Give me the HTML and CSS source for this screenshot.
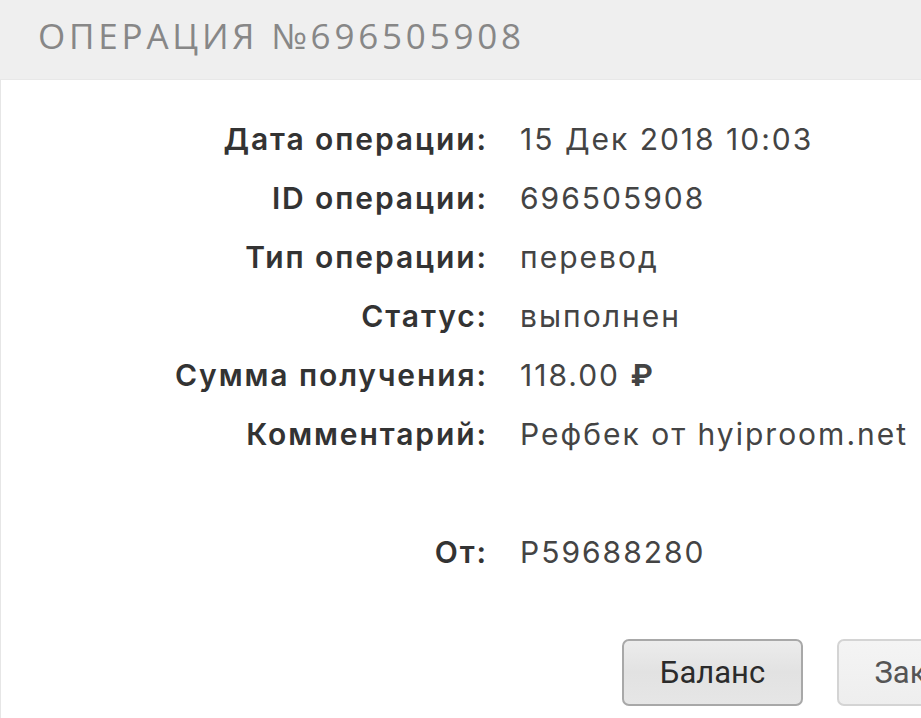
FILE: index.html
```html
<!DOCTYPE html>
<html lang="ru">
<head>
<meta charset="utf-8">
<link rel="stylesheet" href="styles.css">
</head>
<body>
<div class="dialog">
  <div class="dialog-head"><h1 class="dialog-title">ОПЕРАЦИЯ №696505908</h1></div>
  <div class="dialog-body">
    <dl class="details">
      <dt>Дата операции:</dt><dd>15 Дек 2018 10:03</dd>
      <dt>ID операции:</dt><dd>696505908</dd>
      <dt>Тип операции:</dt><dd>перевод</dd>
      <dt>Статус:</dt><dd>выполнен</dd>
      <dt>Сумма получения:</dt><dd>118.00 <span class="rub">₽</span></dd>
      <dt>Комментарий:</dt><dd>Рефбек от hyiproom.net</dd>
      <dt class="empty"></dt><dd class="empty"></dd>
      <dt>От:</dt><dd>P59688280</dd>
    </dl>
    <div class="actions">
      <button class="btn">Баланс</button>
      <button class="btn btn-light">Закрыть</button>
    </div>
  </div>
</div>
</body>
</html>
```
FILE: styles.css
```css
html, body {
  margin: 0;
  padding: 0;
  background: #fff;
  overflow: hidden;
}
.dialog {
  width: 1200px;
  height: 718px;
  background: #fff;
}
.dialog-head {
  height: 80px;
  background: #efefef;
  display: flex;
  align-items: center;
  padding-left: 38px;
  border-bottom: 1px solid #e8e8e8;
  box-sizing: border-box;
}
.dialog-title {
  margin: 0;
  font-family: "Open Sans", sans-serif;
  font-weight: 400;
  font-size: 35px;
  letter-spacing: 3.8px;
  color: #878787;
  line-height: 1;
  margin-top: -9px;
}
.dialog-body {
  border-left: 1px solid #e6e6e6;
  height: 638px;
  box-sizing: border-box;
  padding-top: 29px;
}
.details {
  margin: 0;
  display: grid;
  grid-template-columns: 485px auto;
  column-gap: 34px;
  grid-auto-rows: 59px;
  font-family: "Inter", sans-serif;
  font-size: 30px;
  align-items: center;
}
.details dt {
  text-align: right;
  font-weight: 600;
  color: #333;
  letter-spacing: 1.9px;
  margin-right: -2px;
}
.details dd {
  margin: 0;
  font-weight: 400;
  color: #444;
  white-space: nowrap;
  letter-spacing: 2px;
}
.rub { font-weight: 700; }
.actions {
  display: flex;
  gap: 34px;
  padding-left: 621px;
  margin-top: 58px;
}
.btn {
  height: 67px;
  width: 181px;
  border: 2px solid #a8a8a8;
  border-radius: 7px;
  background: linear-gradient(#ececec, #e2e2e2 50%, #e6e6e6);
  font-family: "Roboto", sans-serif;
  font-size: 31px;
  color: #2b2b2b;
  padding: 0;
}
.btn-light {
  border-color: #d4d4d4;
  background: linear-gradient(#f4f4f4, #eeeeee);
  color: #555;
  width: 200px;
}
```
